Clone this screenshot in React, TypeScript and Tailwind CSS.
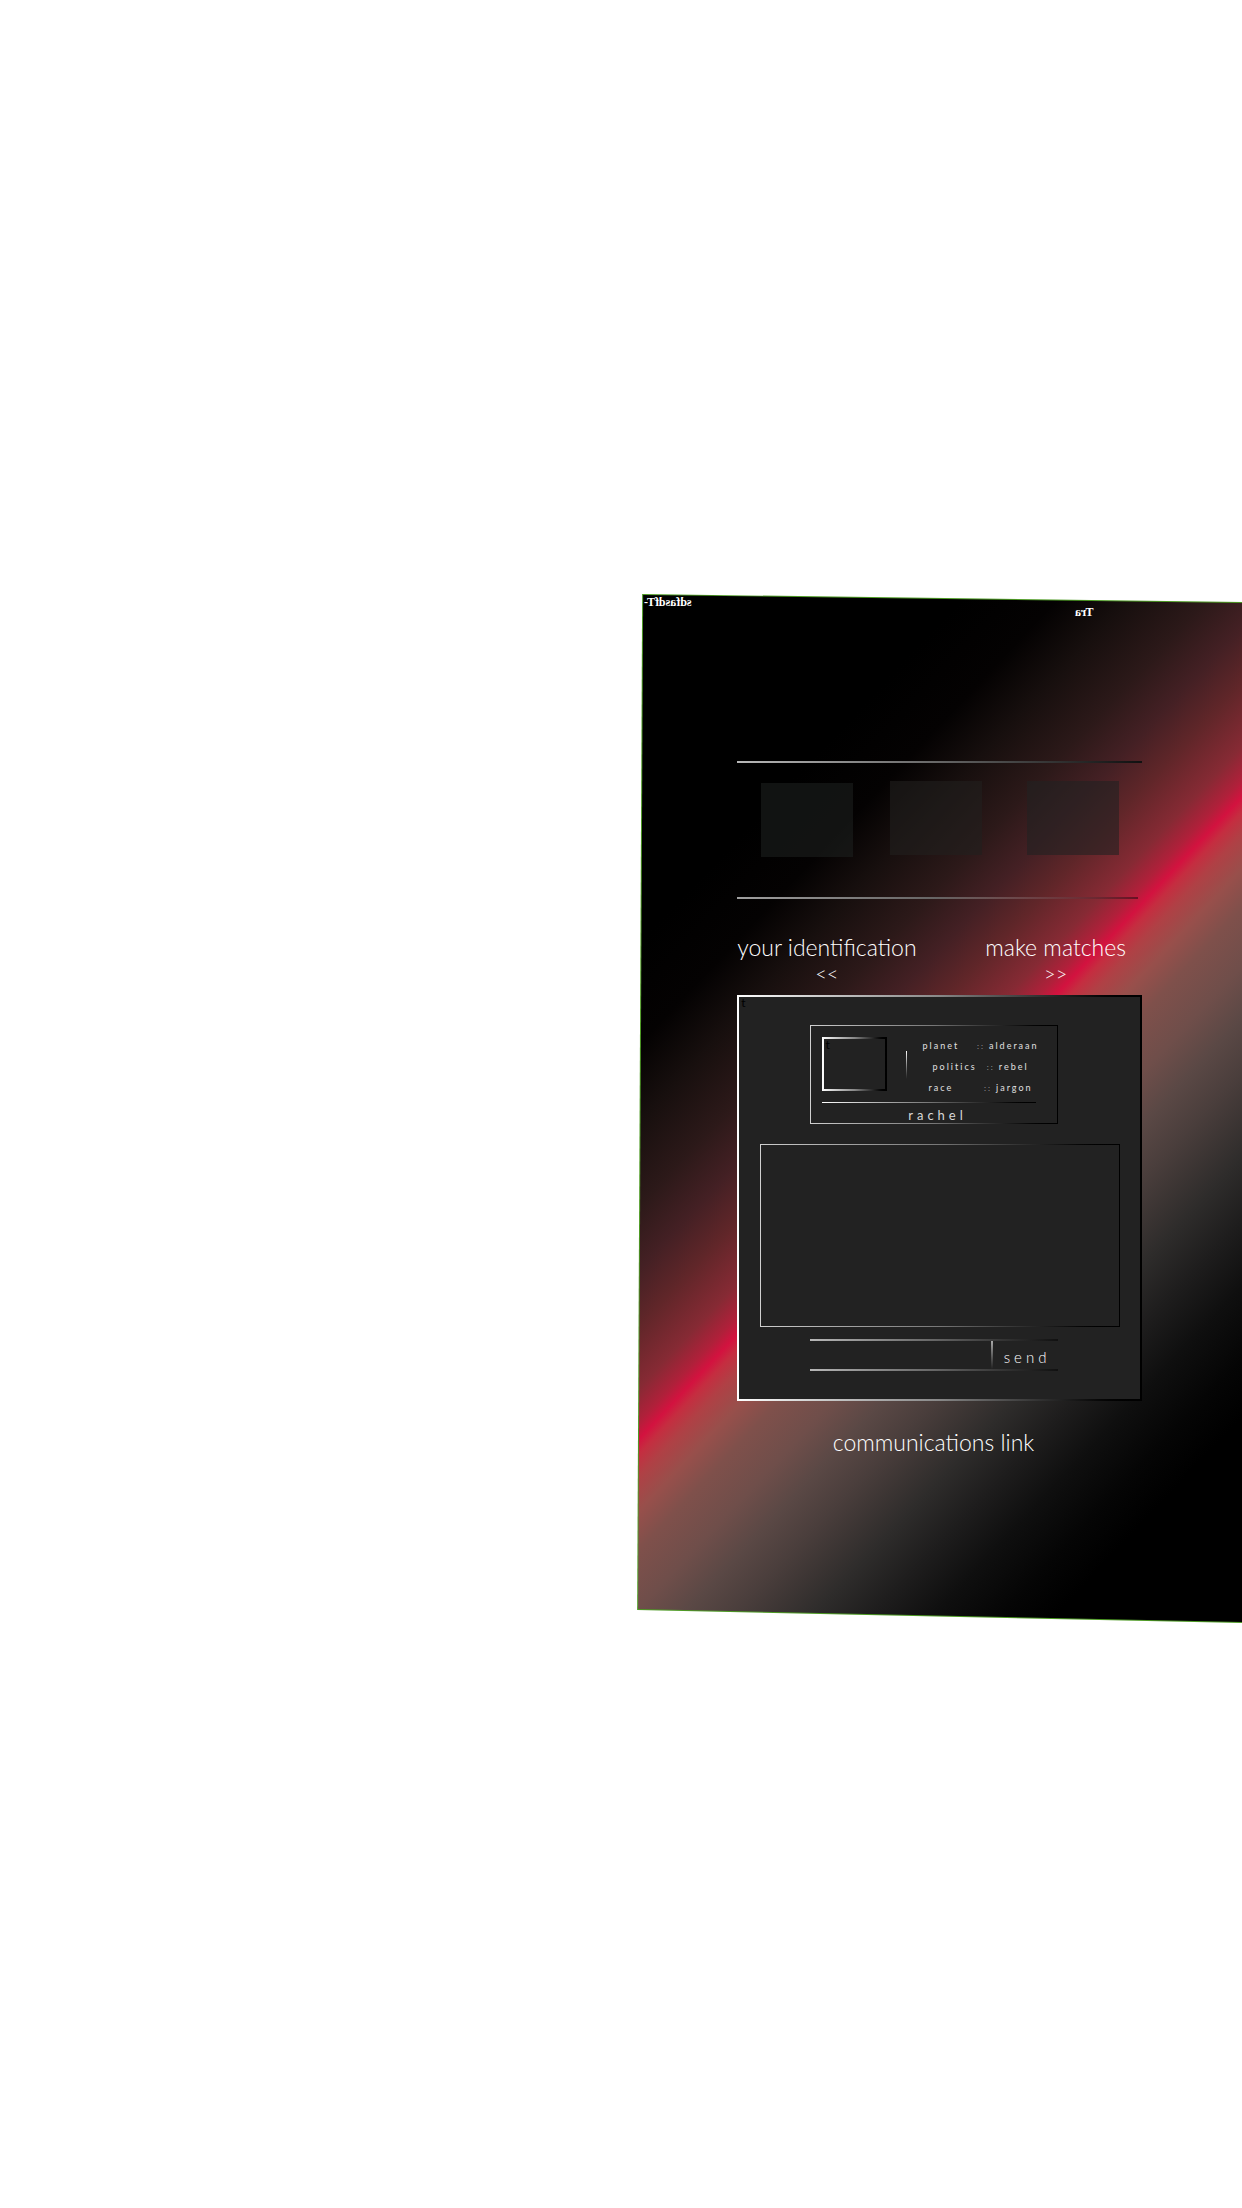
import React from "react";

const fade = "bg-linear-to-r from-[#d0d0d0] via-[#777777] to-black";

function Rule({ className = "" }: { className?: string }) {
  return <div className={`h-0.5 bg-linear-to-r from-[#b8b8b8] via-[#666666] to-[#111111] ${className}`} />;
}

function Fact({ name, value, className = "" }: { name: string; value: string; className?: string }) {
  return (
    <div className={`flex h-[21px] items-center ${className}`}>
      <dt>{name}</dt>
      <dd className="ml-auto flex items-center gap-1">
        <span className="text-[8px] text-[#999999]">::</span>
        <span>{value}</span>
      </dd>
    </div>
  );
}

export default function App() {
  return (
    <div className="min-h-screen overflow-hidden bg-white pt-[594px] pb-[585px] font-['Lato',sans-serif] text-white">
      <main className="relative isolate ml-[51.3%] h-[1029px]">
        <div className="absolute inset-0 -z-10 bg-[#4d9a24] [clip-path:polygon(5px_0,100%_8px,100%_100%,0_1016px)]" />
        <div className="absolute inset-0 -z-10 bg-[linear-gradient(133.2deg,#000_0px,#000_240px,#040202_310px,#170f0e_362px,#2c1919_420px,#442024_464px,#602629_502px,#862a34_545px,#b0203a_568px,#d3123f_580px,#c52d40_590px,#b04045_605px,#984f4b_629px,#7f504b_656px,#6f4e4a_696px,#5a4845_732px,#4a3e3c_769px,#2e2c2b_827px,#1e1d1d_870px,#0f0f0f_915px,#050505_964px,#000_1004px)] [clip-path:polygon(6px_1px,100%_9px,100%_1028px,1px_1015px)]" />

        <header className="flex h-[187px] items-start justify-between pt-px pr-[149px] pl-[7px] font-['Liberation_Serif',serif] text-[12px] leading-[14px] font-bold">
          <span className="-scale-x-100">sdfasdfT-</span>
          <span className="mt-2.5 -scale-x-100">Tra</span>
        </header>

        <div className="mr-[100px] ml-[100px]">
          <section aria-label="Matches" className="-mt-5 h-[136px]">
            <Rule />
            <div className="flex gap-[37px] pt-[18px] pl-6">
              <div className="mt-0.5 h-[74px] w-[92px] bg-[#1d1f1e]/60" />
              <div className="h-[74px] w-[92px] bg-[#211f1e]/60" />
              <div className="ml-2 h-[74px] w-[92px] bg-[#222222]/60" />
            </div>
            <div className="mt-10 mr-1 h-0.5 bg-linear-to-r from-[#a0a0a0] via-[#666464] to-[#6a1024]" />
          </section>

          <nav className="mt-9 flex h-[62px] justify-between pr-4 text-[23px] leading-7 font-light">
            <a href="#identification" className="text-center">
              your identification
              <span className="block text-[20px] leading-6">&lt;&lt;</span>
            </a>
            <a href="#matches" className="text-center">
              make matches
              <span className="block text-[20px] leading-6">&gt;&gt;</span>
            </a>
          </nav>

          <section className="bg-linear-to-r from-white via-[#888888] to-black p-0.5">
            <div className="relative flex h-[402px] flex-col items-center bg-[#222222] pt-7">
              <span className="absolute top-0 left-0.5 text-[12px] leading-3 text-black">t</span>
              <div className={`mr-3 w-[248px] p-px ${fade}`}>
                <div className="h-[97px] bg-[#222222] px-[11px] pt-[11px]">
                  <div className="flex h-[65px]">
                    <div className="h-[54px] w-[65px] bg-linear-to-r from-white via-[#888888] to-black p-0.5">
                      <div className="h-full bg-[#222222] pl-0.5 text-[12px] leading-3 text-black">t</div>
                    </div>
                    <div className="mt-3.5 ml-[19px] h-7 w-px bg-linear-to-b from-white to-[#222222]" />
                    <dl className="-mt-0.5 ml-4 w-[116px] text-[9px] tracking-[2px] text-[#e0e0e0]">
                      <Fact name="planet" value="alderaan" />
                      <Fact name="politics" value="rebel" className="mr-2.5 ml-2.5" />
                      <Fact name="race" value="jargon" className="mr-1.5 ml-1.5" />
                    </dl>
                  </div>
                  <div className="mr-2.5 h-px bg-linear-to-r from-white via-[#777777] to-black" />
                  <h2 className="pl-2 text-center text-[13px] leading-6 tracking-[4px] text-[#d8d8d8]">rachel</h2>
                </div>
              </div>

              <div className={`mt-5 w-[360px] p-px ${fade}`}>
                <div className="h-[181px] bg-[#222222]" />
              </div>

              <form className="mt-3 mr-3 w-[248px]">
                <Rule />
                <div className="flex h-7">
                  <input aria-label="Message" className="w-[181px] bg-transparent px-2 text-xs outline-none" />
                  <div className="h-7 w-0.5 bg-linear-to-b from-[#aaaaaa] to-[#222222]" />
                  <button type="button" className="flex-1 pl-1 text-[15px] leading-8 font-light tracking-[4px]">send</button>
                </div>
                <Rule />
              </form>
            </div>
          </section>

          <h1 className="mt-[25px] pr-3 text-center text-[23px] leading-8 font-light">communications link</h1>
        </div>
      </main>
    </div>
  );
}
